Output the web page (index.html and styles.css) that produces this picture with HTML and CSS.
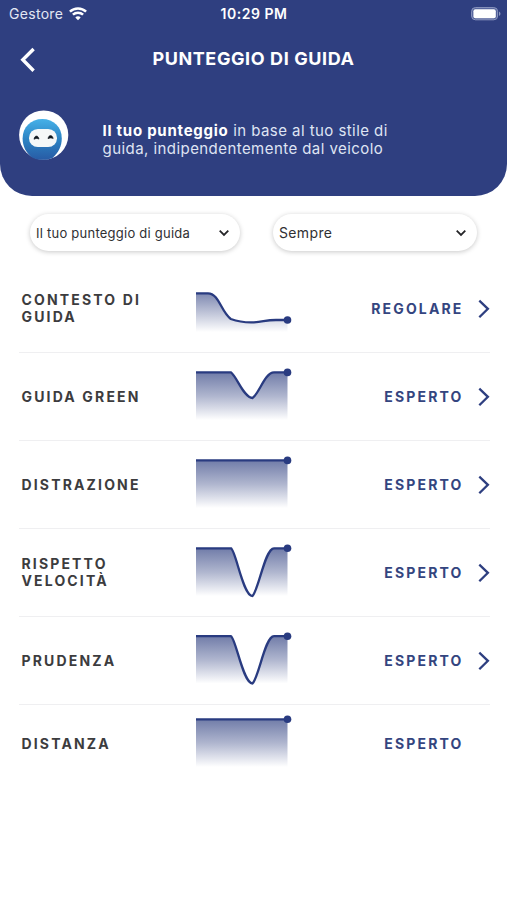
FILE: index.html
```html
<!DOCTYPE html>
<html lang="it">
<head>
<meta charset="utf-8">
<title>Punteggio di guida</title>
<link rel="stylesheet" href="styles.css">
</head>
<body>
<svg class="defs" width="0" height="0" aria-hidden="true">
  <defs>
    <linearGradient id="fade" x1="0" y1="0" x2="0" y2="1">
      <stop offset="0" stop-color="#2e3f80" stop-opacity=".68"/>
      <stop offset=".5" stop-color="#2e3f80" stop-opacity=".38"/>
      <stop offset="1" stop-color="#2e3f80" stop-opacity="0"/>
    </linearGradient>
    <linearGradient id="fade-low" gradientUnits="userSpaceOnUse" x1="0" y1="28" x2="0" y2="67">
      <stop offset="0" stop-color="#2e3f80" stop-opacity=".62"/>
      <stop offset="1" stop-color="#2e3f80" stop-opacity="0"/>
    </linearGradient>
    <linearGradient id="hood" x1="0" y1="0" x2="0" y2="1">
      <stop offset="0" stop-color="#46b1e8"/>
      <stop offset=".5" stop-color="#2c83c3"/>
      <stop offset="1" stop-color="#285ba5"/>
    </linearGradient>
  </defs>
</svg>
<header class="header">
  <div class="status">
    <div class="carrier">
      <span>Gestore</span>
      <svg width="18" height="14" viewBox="0 0 18 14" fill="none" stroke="#fff" stroke-width="2.5">
        <path d="M.9 4.600C5.400.3 12.600.3 17.100 4.600"/>
        <path d="M3.900 7.700c2.900-2.700 7.300-2.700 10.200 0"/>
        <path d="M9 13.200 6.300 10.400c1.500-1.400 3.900-1.400 5.400 0z" fill="#fff" stroke="none"/>
      </svg>
    </div>
    <span class="time">10:29 PM</span>
    <svg class="battery" width="30" height="14" viewBox="0 0 30 14">
      <rect x=".6" y=".6" width="26" height="12.200" rx="3.800" fill="#53629b" stroke="#8d98bf"/>
      <rect x="2.400" y="2.200" width="22.400" height="9" rx="2" fill="#fff"/>
      <path d="M28 4.600c2 .9 2 3.500 0 4.400z" fill="#8d98bf"/>
    </svg>
  </div>
  <div class="bar">
    <svg class="back" width="16" height="26" viewBox="0 0 16 26" fill="none" stroke="#fff" stroke-width="3.400">
      <path d="M13.600 2 2.800 12.800l10.800 11"/>
    </svg>
    <h1>PUNTEGGIO DI GUIDA</h1>
  </div>
  <div class="intro">
    <svg width="50" height="50" viewBox="0 0 50 50">
      <circle cx="24.700" cy="25" r="24.600" fill="#fff"/>
      <path d="M14 48C7 43.500 3.600 36 3.600 28.500 3.600 17 12 9 23.300 9S42.800 17 42.800 28.500c0 7-3 14-9.300 19.400-6 2.600-13.500 2.600-19.500.1z" fill="url(#hood)"/>
      <rect x="10" y="19" width="28" height="18" rx="8.800" fill="#f5f8f8"/>
      <path d="M15 29.300c.6-4.300 4.300-4.300 5-.2-1.500-.9-3.500-.8-5 .2zM29 28.700c.6-4.200 4.400-4.200 5.200-.2-1.600-.8-3.600-.7-5.200.2z" fill="#10171e" stroke="#10171e" stroke-width=".6"/>
    </svg>
    <p><b>Il tuo punteggio</b> in base al tuo stile di<br>guida, indipendentemente dal veicolo</p>
  </div>
</header>
<main>
  <div class="filters">
    <button class="select score"><span>Il tuo punteggio di guida</span>
      <svg width="12" height="8" viewBox="0 0 12 8"><path d="m1.700 1.700 4.300 4.200 4.300-4.200"/></svg></button>
    <button class="select period"><span>Sempre</span>
      <svg width="12" height="8" viewBox="0 0 12 8"><path d="m1.700 1.700 4.300 4.200 4.300-4.200"/></svg></button>
  </div>
  <div class="list">
    <section class="row">
      <h2>CONTESTO DI<br>GUIDA</h2>
      <svg class="chart" viewBox="0 0 110 88">
        <path class="low" d="M6 28.300H18C29 28.300 31 47 40.800 54c7 2.500 14 3.500 21.200 3.400C73 57 75 55 86 55H97.500V67H6z"/>
        <path class="line" d="M6 28.300H18C29 28.300 31 47 40.800 54c7 2.500 14 3.500 21.200 3.400C73 57 75 55 86 55H97.500"/>
        <circle cx="97.500" cy="55" r="3.800"/>
      </svg>
      <span class="grade">REGOLARE</span>
      <svg class="next" viewBox="0 0 12 20"><path d="m1.300 1.600 8.600 8.200-8.600 8.500"/></svg>
    </section>
    <section class="row">
      <h2>GUIDA GREEN</h2>
      <svg class="chart" viewBox="0 0 110 88">
        <path class="area" d="M6 19.400H41C47 24 54 45 62.500 45 69 41 75 19.400 84 19.400H97.500V67H6z"/>
        <path class="line" d="M6 19.400H41C47 24 54 45 62.500 45 69 41 75 19.400 84 19.400H97.500"/>
        <circle cx="97.500" cy="19.400" r="3.800"/>
      </svg>
      <span class="grade">ESPERTO</span>
      <svg class="next" viewBox="0 0 12 20"><path d="m1.300 1.600 8.600 8.200-8.600 8.500"/></svg>
    </section>
    <section class="row">
      <h2>DISTRAZIONE</h2>
      <svg class="chart" viewBox="0 0 110 88">
        <path class="area" d="M6 19.400H97.500V67H6z"/>
        <path class="line" d="M6 19.400H97.500"/>
        <circle cx="97.500" cy="19.400" r="3.800"/>
      </svg>
      <span class="grade">ESPERTO</span>
      <svg class="next" viewBox="0 0 12 20"><path d="m1.300 1.600 8.600 8.200-8.600 8.500"/></svg>
    </section>
    <section class="row">
      <h2>RISPETTO<br>VELOCITÀ</h2>
      <svg class="chart" viewBox="0 0 110 88">
        <path class="area" d="M6 19.300H41C46 22 53 67 62.500 67 69 60 75 19.300 84 19.300H97.500V67H6z"/>
        <path class="line" d="M6 19.300H41C46 22 53 67 62.500 67 69 60 75 19.300 84 19.300H97.500"/>
        <circle cx="97.500" cy="19.300" r="3.800"/>
      </svg>
      <span class="grade">ESPERTO</span>
      <svg class="next" viewBox="0 0 12 20"><path d="m1.300 1.600 8.600 8.200-8.600 8.500"/></svg>
    </section>
    <section class="row">
      <h2>PRUDENZA</h2>
      <svg class="chart" viewBox="0 0 110 88">
        <path class="area" d="M6 19.200H41C46 22 53 66.500 62.500 66.500 69 60 75 19.200 84 19.200H97.500V66.500H6z"/>
        <path class="line" d="M6 19.200H41C46 22 53 66.500 62.500 66.500 69 60 75 19.200 84 19.200H97.500"/>
        <circle cx="97.500" cy="19.200" r="3.800"/>
      </svg>
      <span class="grade">ESPERTO</span>
      <svg class="next" viewBox="0 0 12 20"><path d="m1.300 1.600 8.600 8.200-8.600 8.500"/></svg>
    </section>
    <section class="row last">
      <h2>DISTANZA</h2>
      <svg class="chart" viewBox="0 0 110 78">
        <path class="area" d="M6 14.300H97.500V62H6z"/>
        <path class="line" d="M6 14.300H97.500"/>
        <circle cx="97.500" cy="14.300" r="3.800"/>
      </svg>
      <span class="grade">ESPERTO</span>
    </section>
  </div>
</main>
</body>
</html>
```
FILE: styles.css
```css
* { box-sizing: border-box; }
body { margin: 0; background: #fff; color: #3c3c3e; font-family: Inter, "Liberation Sans", sans-serif; }
svg { display: block; flex: none; }
.defs { position: absolute; }
h1, h2, p { margin: 0; }

.header { height: 196px; background: #2f3f80; color: #fff; border-radius: 0 0 32px 32px; }
.status { height: 27px; padding: 0 6px 0 9px; display: grid; grid-template-columns: 1fr auto 1fr; align-items: center; }
.carrier { display: flex; align-items: center; gap: 6px; font-size: 14px; letter-spacing: .3px; color: #e3e7f4; }
.time { font-size: 14px; font-weight: 600; letter-spacing: .55px; margin-right: 2px; }
.battery { justify-self: end; }
.bar { height: 65px; display: grid; grid-template-columns: 36px 1fr 36px; align-items: center; }
.back { margin-left: 20px; }
h1 { text-align: center; font-size: 18px; line-height: 22px; font-weight: 700; letter-spacing: .6px; padding-bottom: 1px; }
.intro { display: flex; align-items: center; padding: 18px 19px 0; gap: 33.5px; }
.intro p { font-size: 15px; line-height: 18px; letter-spacing: .44px; color: #dfe4f3; padding-top: 9px; white-space: nowrap; }
.intro b { color: #fff; letter-spacing: .75px; }

.filters { display: flex; gap: 33px; padding: 18px 30px 0; }
.select { height: 37px; border: 0; border-radius: 19px; background: #fff; box-shadow: 0 1px 5px rgba(0, 0, 0, .22); display: flex; align-items: center; justify-content: space-between; font-family: inherit; color: #303033; padding: 0 10px 0 6px; white-space: nowrap; }
.select path { fill: none; stroke: #252528; stroke-width: 1.8; }
.score { width: 210px; font-size: 13px; letter-spacing: .24px; }
.period { width: 204px; font-size: 14px; letter-spacing: .35px; }

.list { padding: 14px 17px 0 19px; }
.row { height: 88px; border-bottom: 1px solid #efeff1; display: grid; grid-template-columns: 171px 110px 1fr 12px; align-items: center; }
h2 { padding: 0 0 2px 2.5px; font-size: 14px; line-height: 17px; font-weight: 700; letter-spacing: 2.15px; }
.chart { width: 110px; height: 88px; align-self: start; }
.chart .area { fill: url(#fade); }
.chart .low { fill: url(#fade-low); }
.chart .line { fill: none; stroke: #293b80; stroke-width: 2.3; stroke-linejoin: round; }
.chart circle { fill: #293b80; }
.grade { justify-self: end; margin-right: 14.5px; padding-bottom: 2px; font-size: 14px; line-height: 17px; font-weight: 700; letter-spacing: 2.15px; color: #34457f; }
.next { width: 12px; height: 20px; }
.next path { fill: none; stroke: #2e3f80; stroke-width: 2.3; }
.last { height: 78px; border: 0; }
.last .chart { height: 78px; }
```
